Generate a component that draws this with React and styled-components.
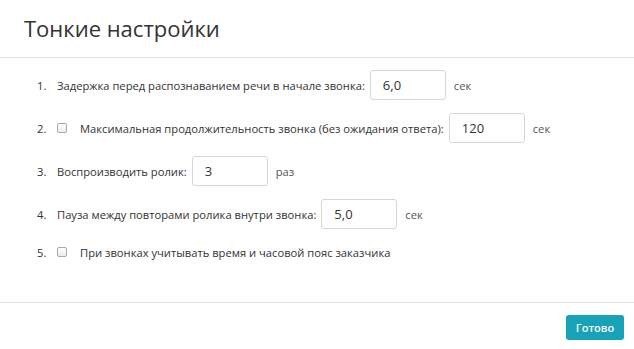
import React from "react";
import styled, { createGlobalStyle } from "styled-components";

const GlobalStyle = createGlobalStyle`
	* {
		box-sizing: border-box;
	}
	body {
		margin: 0;
		background: #ffffff;
		font-family: "Open Sans", "Liberation Sans", sans-serif;
		color: #333333;
	}
`;

const Modal = styled.div`
	width: 634px;
	height: 349px;
	display: flex;
	flex-direction: column;
	background: #ffffff;
`;

const Header = styled.div`
	height: 58px;
	padding: 0 24px;
	display: flex;
	align-items: center;
	border-bottom: 1px solid #e0e0e0;
`;

const Title = styled.h1`
	margin: 0;
	padding-bottom: 2px;
	font-size: 22px;
	font-weight: 400;
	color: #333333;
`;

const Body = styled.ol`
	flex: 1;
	margin: 0;
	padding: 12px 0 0 37px;
	list-style: none;
	display: flex;
	flex-direction: column;
	gap: 13px;
	border-bottom: 1px solid #e0e0e0;
`;

const Row = styled.li`
	display: flex;
	align-items: center;
	min-height: ${(p) => (p.$short ? "20px" : "30px")};
	font-size: 11.2px;
`;

const Num = styled.span`
	width: 20px;
	flex-shrink: 0;
`;

const Check = styled.span`
	width: 10px;
	height: 10px;
	margin-right: 13px;
	border: 1px solid #a8a8a8;
	border-radius: 2px;
	background: linear-gradient(#ffffff, #ececec);
	flex-shrink: 0;
`;

const Label = styled.span`
	white-space: nowrap;
`;

const Input = styled.div`
	width: 76px;
	height: 30px;
	margin: 0 8px 0 5px;
	padding: 0 12px;
	display: flex;
	align-items: center;
	border: 1px solid #d6d6d6;
	border-radius: 3px;
	font-size: 13px;
	color: #333333;
`;

const Unit = styled.span`
	color: #555555;
`;

const Footer = styled.div`
	display: flex;
	justify-content: flex-end;
	padding: 12px 10px 9px;
`;

const Button = styled.button`
	width: 58px;
	height: 25px;
	border: none;
	border-radius: 3px;
	background: #17a2b8;
	color: #ffffff;
	font-family: "Open Sans", "Liberation Sans", sans-serif;
	font-size: 11px;
	font-weight: 600;
	padding: 0;
	cursor: pointer;
`;

const items = [
	{ label: "Задержка перед распознаванием речи в начале звонка:", value: "6,0", unit: "сек" },
	{ label: "Максимальная продолжительность звонка (без ожидания ответа):", value: "120", unit: "сек", check: true },
	{ label: "Воспроизводить ролик:", value: "3", unit: "раз" },
	{ label: "Пауза между повторами ролика внутри звонка:", value: "5,0", unit: "сек" },
	{ label: "При звонках учитывать время и часовой пояс заказчика", check: true },
];

export default function App() {
	return (
		<>
			<GlobalStyle />
			<Modal>
				<Header>
					<Title>Тонкие настройки</Title>
				</Header>
				<Body>
					{items.map((item, i) => (
						<Row key={i} $short={!item.value}>
							<Num>{i + 1}.</Num>
							{item.check && <Check />}
							<Label>{item.label}</Label>
							{item.value && <Input>{item.value}</Input>}
							{item.unit && <Unit>{item.unit}</Unit>}
						</Row>
					))}
				</Body>
				<Footer>
					<Button>Готово</Button>
				</Footer>
			</Modal>
		</>
	);
}
